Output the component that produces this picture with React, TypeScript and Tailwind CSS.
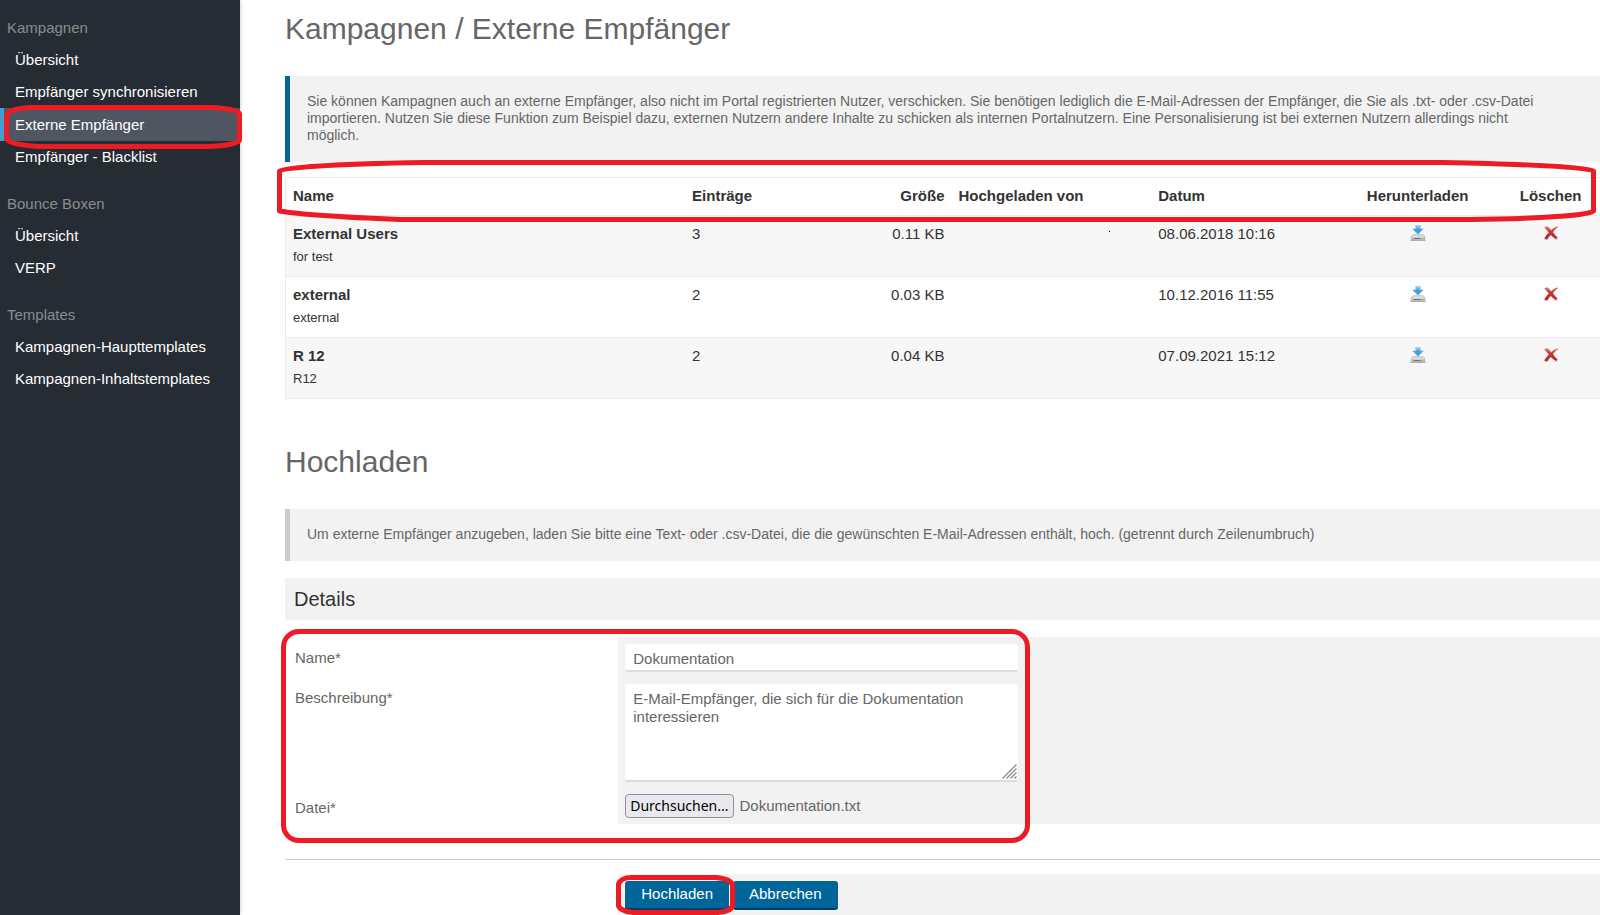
import clsx from "clsx";
import React, { useRef, useState } from "react";

interface INavGroup {
  title: string;
  items: { name: string; url: string }[];
}

interface IRecipientList {
  name: string;
  description: string;
  entries: number;
  size: string;
  date: string;
}

const ACTIVE_URL = "#externe-empfaenger";

const navigation: INavGroup[] = [
  {
    title: "Kampagnen",
    items: [
      { name: "Übersicht", url: "#kampagnen" },
      { name: "Empfänger synchronisieren", url: "#synchronisieren" },
      { name: "Externe Empfänger", url: "#externe-empfaenger" },
      { name: "Empfänger - Blacklist", url: "#blacklist" },
    ],
  },
  {
    title: "Bounce Boxen",
    items: [
      { name: "Übersicht", url: "#bounce-boxen" },
      { name: "VERP", url: "#verp" },
    ],
  },
  {
    title: "Templates",
    items: [
      { name: "Kampagnen-Haupttemplates", url: "#haupttemplates" },
      { name: "Kampagnen-Inhaltstemplates", url: "#inhaltstemplates" },
    ],
  },
];

const lists: IRecipientList[] = [
  {
    name: "External Users",
    description: "for test",
    entries: 3,
    size: "0.11 KB",
    date: "08.06.2018 10:16",
  },
  {
    name: "external",
    description: "external",
    entries: 2,
    size: "0.03 KB",
    date: "10.12.2016 11:55",
  },
  {
    name: "R 12",
    description: "R12",
    entries: 2,
    size: "0.04 KB",
    date: "07.09.2021 15:12",
  },
];

// red marker line, stretched over the element it highlights
const Marker = ({
  className,
  viewBox,
  d,
}: {
  className: string;
  viewBox: string;
  d: string;
}) => (
  <svg
    className={clsx("pointer-events-none absolute z-10", className)}
    viewBox={viewBox}
    preserveAspectRatio="none"
    fill="none"
    aria-hidden="true"
  >
    <path
      d={d}
      stroke="#ed1c24"
      strokeWidth="5"
      strokeLinejoin="round"
      vectorEffect="non-scaling-stroke"
    />
  </svg>
);

const DownloadIcon = () => (
  <svg className="size-4" viewBox="0 0 16 16" aria-hidden="true">
    <defs>
      <linearGradient id="arrow" x1="0" y1="0" x2="0" y2="1">
        <stop offset="0" stopColor="#b5daf3" />
        <stop offset="0.45" stopColor="#4a9bd8" />
        <stop offset="1" stopColor="#1fb0ff" />
      </linearGradient>
      <linearGradient id="drive" x1="0" y1="0" x2="0" y2="1">
        <stop offset="0" stopColor="#ececec" />
        <stop offset="1" stopColor="#b4b4b4" />
      </linearGradient>
    </defs>
    <path d="M0 15h16v1H0z" fill="#c4c4c4" />
    <path
      d="M3.300 9.800h9.400q.8 0 1.200.8l.8 1.600v2.500q0 .6-.6.6H1.900q-.6 0-.6-.6v-2.500l.8-1.600q.4-.8 1.200-.8z"
      fill="url(#drive)"
      stroke="#a2a2a2"
      strokeWidth="0.7"
    />
    <path d="M3.500 13h7v1h-7z" fill="#707070" />
    <path d="M11.600 12.800h1.500v1.200h-1.500z" fill="#5fd05f" />
    <path
      d="M5.700.2h4.600v3.700h3L8 9.300 2.700 3.900h3z"
      fill="url(#arrow)"
      stroke="#69a9d6"
      strokeWidth="0.4"
    />
  </svg>
);

const DeleteIcon = () => (
  <svg className="size-4" viewBox="0 0 16 16" aria-hidden="true">
    <defs>
      <linearGradient id="cross" x1="0" y1="0" x2="0" y2="1">
        <stop offset="0" stopColor="#d9827c" />
        <stop offset="0.4" stopColor="#c23a36" />
        <stop offset="1" stopColor="#b32424" />
      </linearGradient>
    </defs>
    <path d="M1 14.400h4.500M10.500 14.400h4.500" stroke="#d4d4d4" strokeWidth="0.9" />
    <path
      d="M1.200 2.300 4.300 1.300C5.800 2.200 7 3.700 8.200 5.300 9.800 3.400 11.600 1.900 14.800 1.500L15.200 2.200C12.900 3.500 11.200 5.200 10 7.300 11.200 9.100 12.700 10.900 14.700 12.700L12.900 14C10.900 12.900 9.300 11.500 7.900 9.900 6.500 11.200 5.300 12.700 4.200 14.400L1.300 13.600C2.600 11.200 4 9.300 5.800 7.600 4.300 5.900 2.800 4.100 1.200 2.300z"
      fill="url(#cross)"
    />
  </svg>
);

const Sidebar = () => (
  <aside className="w-60 shrink-0 bg-[#262c33] pt-3 shadow-[0_0_4px_rgba(0,0,0,0.25)]">
    <nav className="flex flex-col gap-[15px]">
      {navigation.map((group) => (
        <div key={group.title}>
          <h3 className="pl-[7px] leading-8 text-[#8a8d90]">{group.title}</h3>
          <ul>
            {group.items.map((item) => (
              <li key={item.url} className="relative">
                <a
                  href={item.url}
                  className={clsx(
                    "block pl-[15px] text-white",
                    item.url === ACTIVE_URL
                      ? "bg-[linear-gradient(90deg,#3fa0d2_4px,#4f5561_4px)] leading-[33px]"
                      : "leading-8"
                  )}
                >
                  {item.name}
                </a>
                {item.url === ACTIVE_URL && (
                  <Marker
                    className="-top-[3px] left-1 h-11 w-[238px]"
                    viewBox="0 0 238 44"
                    d="M2.500 11C3 6 14 2.500 28 2.500H206C222 3 235 5 235.500 9V35C235 38 222 41 204 41.500H34C16 40 3 38 2.500 33Z"
                  />
                )}
              </li>
            ))}
          </ul>
        </div>
      ))}
    </nav>
  </aside>
);

const Callout = ({
  primary,
  children,
}: {
  primary?: boolean;
  children: React.ReactNode;
}) => (
  <p
    className={clsx(
      "border-l-[5px] bg-[#f2f2f2] pt-[17px] pr-[72px] pb-[18px] pl-[17px] text-[14px] leading-[17px] text-[#666]",
      primary ? "border-[#006699]" : "border-[#ccc]"
    )}
  >
    {children}
  </p>
);

const RecipientTable = () => (
  <div className="relative mt-[15px]">
    <table className="w-full table-fixed border-collapse border border-[#ebebeb] text-left text-[#333]">
      <thead>
        <tr className="h-[38px]">
          <th className="w-[30%] px-[7px]">Name</th>
          <th className="w-[10%] px-[7px]">Einträge</th>
          <th className="w-[10%] px-[7px] text-right">Größe</th>
          <th className="w-[15%] px-[7px]">Hochgeladen von</th>
          <th className="w-[15%] px-[7px]">Datum</th>
          <th className="w-[10%] px-[7px] text-center">Herunterladen</th>
          <th className="w-[10%] px-[7px] text-center">Löschen</th>
        </tr>
      </thead>
      <tbody>
        {lists.map((list) => (
          <tr
            key={list.name}
            className="h-[61px] border-t border-[#ebebeb] align-top odd:bg-[#f7f7f7]"
          >
            <td className="px-[7px] pt-[9px]">
              <strong className="block leading-[18px]">{list.name}</strong>
              <span className="mt-1 block text-[13px] leading-5">
                {list.description}
              </span>
            </td>
            <td className="px-[7px] pt-[9px] leading-[18px]">
              {list.entries}
            </td>
            <td className="px-[7px] pt-[9px] text-right leading-[18px]">
              {list.size}
            </td>
            <td />
            <td className="px-[7px] pt-[9px] leading-[18px]">{list.date}</td>
            <td className="pt-[9px]">
              <button
                type="button"
                aria-label={`${list.name} herunterladen`}
                className="mx-auto block"
              >
                <DownloadIcon />
              </button>
            </td>
            <td className="pt-[9px]">
              <button
                type="button"
                aria-label={`${list.name} löschen`}
                className="mx-auto block"
              >
                <DeleteIcon />
              </button>
            </td>
          </tr>
        ))}
      </tbody>
    </table>
    <span className="absolute top-[54px] left-[824px] size-px bg-black" />
    <Marker
      className="-top-[17px] -left-2 h-[62px] w-[calc(100%-14px)]"
      viewBox="0 0 1319 62"
      d="M2.500 11C3 8 50 4 148 2.500H1166C1240 4 1315 7 1316.500 11V51C1315 55 1260 59 1193 59.500H123C60 57 20 54 2.500 51Z"
    />
  </div>
);

const UploadForm = () => {
  const [name, setName] = useState("Dokumentation");
  const [description, setDescription] = useState(
    "E-Mail-Empfänger, die sich für die Dokumentation interessieren"
  );
  const [fileName, setFileName] = useState("Dokumentation.txt");
  const fileRef = useRef<HTMLInputElement>(null);

  return (
    <form onSubmit={(e) => e.preventDefault()}>
      <fieldset className="relative mt-[17px]">
        <div className="grid grid-cols-[1fr_3fr]">
          <label
            htmlFor="name"
            className="pt-3 pl-[10px] leading-[17px] text-[#666]"
          >
            Name*
          </label>
          <div className="bg-[#f2f2f2] px-[7px] pt-[7px] pb-[5px]">
            <input
              id="name"
              type="text"
              value={name}
              onChange={(e) => setName(e.target.value)}
              className="block h-7 w-[393px] rounded-[3px] border-b-2 border-[#ddd] bg-white px-2 pt-[2px] text-[#666] outline-none"
            />
          </div>

          <label
            htmlFor="description"
            className="pt-3 pl-[10px] leading-[17px] text-[#666]"
          >
            Beschreibung*
          </label>
          <div className="bg-[#f2f2f2] px-[7px] pt-[7px] pb-[5px]">
            <div className="relative w-[393px]">
              <textarea
                id="description"
                value={description}
                onChange={(e) => setDescription(e.target.value)}
                className="block h-[98px] w-full resize-none rounded-[3px] border-b-2 border-[#ddd] bg-white px-2 pt-[6px] leading-[18px] text-[#666] outline-none"
              />
              <svg
                className="pointer-events-none absolute right-px bottom-[3px] size-[15px]"
                viewBox="0 0 15 15"
                fill="none"
                stroke="#8a8a8a"
                strokeWidth="1.3"
                aria-hidden="true"
              >
                <path d="M.5 14.500 14.500.5M4.500 14.500l10-10M8.500 14.500l6-6M12.500 14.500l2-2" />
              </svg>
            </div>
          </div>

          <label
            htmlFor="file"
            className="pt-3 pl-[10px] leading-[17px] text-[#666]"
          >
            Datei*
          </label>
          <div className="flex items-center gap-[6px] bg-[#f2f2f2] px-[7px] pt-[7px] pb-[6px] text-[#666]">
            <input
              id="file"
              ref={fileRef}
              type="file"
              accept=".txt,.csv"
              tabIndex={-1}
              className="hidden"
              onChange={(e) =>
                setFileName(e.target.files?.[0]?.name ?? fileName)
              }
            />
            <button
              type="button"
              onClick={() => fileRef.current?.click()}
              className="h-6 rounded-[4px] border border-[#8f8f9d] bg-[#e9e9ed] px-1 font-['Noto_Sans',sans-serif] text-[14px] leading-[22px] text-black"
            >
              Durchsuchen...
            </button>
            <span>{fileName}</span>
          </div>
        </div>
        <div className="pointer-events-none absolute -top-2 -left-1 z-10 h-[214px] w-[749px] rounded-[18px] border-[5px] border-[#ed1c24]" />
      </fieldset>

      <hr className="mt-[35px] border-[#ccc]" />

      <div className="mt-[14px] grid grid-cols-[1fr_3fr]">
        <div className="relative col-start-2 flex gap-1 bg-[#f2f2f2] px-[7px] pt-[7px] pb-[5px]">
          <button
            type="submit"
            className="h-[29px] rounded-[3px] border-b-2 border-[#003b6b] bg-[#006699] px-4 text-white"
          >
            Hochladen
          </button>
          <button
            type="reset"
            className="h-[29px] rounded-[3px] border-b-2 border-[#003b6b] bg-[#006699] px-4 text-white"
          >
            Abbrechen
          </button>
          <Marker
            className="top-px -left-[2px] h-10 w-[119px]"
            viewBox="0 0 119 40"
            d="M2.500 9C4 5 9 2.500 15 2.500H99C108 3 115 5 116.500 10V31C115 35 108 37.500 98 37.500H17C9 36.500 4 35 2.500 31Z"
          />
        </div>
      </div>
    </form>
  );
};

const App = () => {
  return (
    <div className="flex min-h-screen overflow-x-hidden bg-white font-['Liberation_Sans',Arial,sans-serif] text-[15px]">
      <Sidebar />
      {/* the content column is wider than the room beside the sidebar */}
      <main className="-mr-[18px] ml-[45px] min-w-0 grow pt-[11px]">
        <h1 className="mb-[29px] text-[30px] leading-9 text-[#666]">
          Kampagnen / Externe Empfänger
        </h1>
        <Callout primary>
          Sie können Kampagnen auch an externe Empfänger, also nicht im Portal
          registrierten Nutzer, verschicken. Sie benötigen lediglich die
          E-Mail-Adressen der Empfänger, die Sie als .txt- oder .csv-Datei
          importieren. Nutzen Sie diese Funktion zum Beispiel dazu, externen
          Nutzern andere Inhalte zu schicken als internen Portalnutzern. Eine
          Personalisierung ist bei externen Nutzern allerdings nicht möglich.
        </Callout>
        <RecipientTable />

        <h2 className="mt-[45px] mb-[29px] text-[30px] leading-9 text-[#666]">
          Hochladen
        </h2>
        <Callout>
          Um externe Empfänger anzugeben, laden Sie bitte eine Text- oder
          .csv-Datei, die die gewünschten E-Mail-Adressen enthält, hoch.
          (getrennt durch Zeilenumbruch)
        </Callout>
        <h3 className="mt-[17px] bg-[#f2f2f2] px-[9px] text-[20px] leading-[42px] text-[#333]">
          Details
        </h3>
        <UploadForm />
      </main>
    </div>
  );
};

export default App;
